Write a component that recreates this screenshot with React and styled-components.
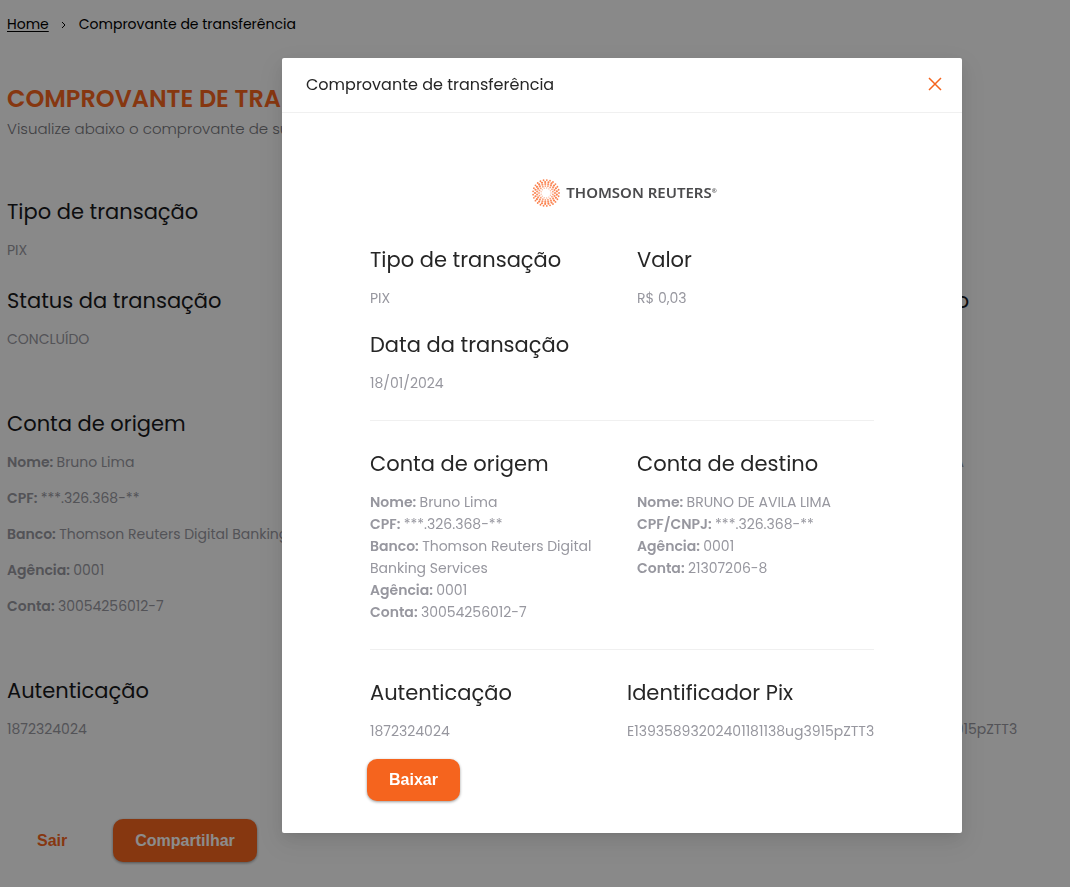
import React from "react";
import styled, { createGlobalStyle } from "styled-components";

const GlobalStyle = createGlobalStyle`
  * { box-sizing: border-box; }
  body {
    margin: 0;
    background: #fafafa;
    color: #18191c;
    font-family: Poppins, Inter, sans-serif;
    font-size: 14px;
    line-height: 22px;
  }
  h1, h2, h3, p { margin: 0; font-weight: 400; }
`;

const Page = styled.main`
  min-height: 100vh;
  padding: 12px 0 24px 7px;
  overflow: hidden;
`;

const Breadcrumb = styled.nav`
  display: flex;
  align-items: center;
  gap: 12px;
  line-height: 24px;
  color: #000;
  a { color: inherit; text-underline-offset: 2px; }
`;

const PageTitle = styled.h1`
  margin-top: 46px;
  font-size: 24px;
  line-height: 34px;
  font-weight: 600;
  color: #f5641e;
  white-space: nowrap;
`;

const Subtitle = styled.p`
  font-size: 15px;
  line-height: 26px;
  font-weight: 300;
  color: #77777c;
`;

const PageRow = styled.section`
  display: grid;
  grid-template-columns: 1fr 300px;
  margin-top: ${(p) => p.$top}px;
`;

const Heading = styled.h3`
  margin-bottom: 11px;
  font-size: 21px;
  line-height: 32px;
  color: ${(p) => (p.$modal ? "#262626" : "#18191c")};
  white-space: nowrap;
`;

const Line = styled.p`
  color: #97979f;
  line-height: 22px;
  margin-bottom: ${(p) => (p.$spaced ? 14 : 0)}px;
  &:last-child { margin-bottom: 0; }
  strong { font-weight: 600; }
`;

const Button = styled.button`
  height: ${(p) => (p.$large ? 43 : 42)}px;
  padding: 0 22px;
  border: 0;
  border-radius: 10px;
  background: ${(p) => (p.$plain ? "transparent" : "#f5641e")};
  color: ${(p) => (p.$plain ? "#f5641e" : "#fff")};
  box-shadow: ${(p) => (p.$plain ? "none" : "0 1px 3px rgba(0, 0, 0, 0.4)")};
  font: 700 16px/20px "Liberation Sans", Arial, sans-serif;
  cursor: pointer;
`;

const PageActions = styled.div`
  display: flex;
  gap: 24px;
  margin-top: 79px;
  padding-left: 8px;
`;

const Overlay = styled.div`
  position: fixed;
  inset: 0;
  display: flex;
  justify-content: center;
  align-items: flex-start;
  padding: 58px 0 0 174px;
  overflow: auto;
  background: rgba(0, 0, 0, 0.45);
`;

const Modal = styled.div`
  width: 680px;
  max-width: 100%;
  background: #fff;
  border-radius: 2px;
  box-shadow: 0 3px 6px -4px rgba(0, 0, 0, 0.12), 0 6px 16px rgba(0, 0, 0, 0.08),
    0 9px 28px 8px rgba(0, 0, 0, 0.05);
`;

const ModalHeader = styled.header`
  display: flex;
  align-items: center;
  justify-content: space-between;
  padding: 15px 20px 15px 24px;
  border-bottom: 1px solid #f0f0f0;
`;

const ModalTitle = styled.h2`
  font-size: 16px;
  line-height: 24px;
  color: #262626;
`;

const CloseButton = styled.button`
  display: flex;
  padding: 0 0 2px;
  border: 0;
  background: none;
  cursor: pointer;
`;

const ModalBody = styled.div`
  padding: 66px 88px 32px;
`;

const Logo = styled.div`
  display: flex;
  align-items: center;
  justify-content: center;
  gap: 6px;
  height: 28px;
  margin-bottom: 37px;
  padding-left: 5px;
  font: 600 15px/28px "Noto Sans", sans-serif;
  color: #4b4b4d;
  span { padding-bottom: 2px; }
  sup { font-size: 6px; line-height: 8px; vertical-align: 5px; }
`;

const Columns = styled.section`
  display: grid;
  grid-template-columns: minmax(0, 1fr) ${(p) => p.$side || 237}px;
  row-gap: 20px;
  & > div:nth-child(odd) { padding-right: 24px; }
`;

const Divider = styled.hr`
  margin: 26px 0 27px;
  border: 0;
  border-top: 1px solid #f0f0f0;
`;

const ModalActions = styled.div`
  margin: 17px 0 0 -3px;
`;

function Field({ title, lines, modal, spaced }) {
  return (
    <div>
      <Heading $modal={modal}>{title}</Heading>
      {lines.map(([label, value]) => (
        <Line key={label + value} $spaced={spaced}>
          {label && <strong>{label}: </strong>}
          {value}
        </Line>
      ))}
    </div>
  );
}

const rings = [
  { r: 5, n: 13, s: 0.7, o: 0.5 },
  { r: 7, n: 17, s: 0.9, o: 0.7 },
  { r: 9, n: 19, s: 1.1, o: 0.8 },
  { r: 11, n: 21, s: 1.1, o: 0.9 },
  { r: 13, n: 25, s: 0.9, o: 0.9 },
];

function Sunburst() {
  return (
    <svg width="28" height="28" viewBox="-14 -14 28 28" fill="#f9763d" aria-hidden="true">
      {rings.map((ring, k) =>
        Array.from({ length: ring.n }, (_, i) => {
          const a = ((i + (k % 2) / 2) / ring.n) * Math.PI * 2;
          return (
            <circle
              key={`${k}-${i}`}
              cx={ring.r * Math.cos(a)}
              cy={ring.r * Math.sin(a)}
              r={ring.s}
              opacity={ring.o}
            />
          );
        })
      )}
    </svg>
  );
}

const origin = [
  ["Nome", "Bruno Lima"],
  ["CPF", "***.326.368-**"],
  ["Banco", "Thomson Reuters Digital Banking Services"],
  ["Agência", "0001"],
  ["Conta", "30054256012-7"],
];
const destination = [
  ["Nome", "BRUNO DE AVILA LIMA"],
  ["CPF/CNPJ", "***.326.368-**"],
  ["Agência", "0001"],
  ["Conta", "21307206-8"],
];
const type = [["", "PIX"]];
const amount = [["", "R$ 0,03"]];
const date = [["", "18/01/2024"]];
const auth = [["", "1872324024"]];
const pixId = [["", "E13935893202401181138ug3915pZTT3"]];

export default function App() {
  return (
    <>
      <GlobalStyle />
      <Page>
        <Breadcrumb>
          <a href="#home">Home</a>
          <svg width="6" height="8" viewBox="0 0 6 8" fill="none" stroke="#000" aria-hidden="true">
            <path d="M1 2 4 5 1 8" />
          </svg>
          <span>Comprovante de transferência</span>
        </Breadcrumb>
        <PageTitle>COMPROVANTE DE TRANSFERÊNCIA</PageTitle>
        <Subtitle>Visualize abaixo o comprovante de sua transferência</Subtitle>
        <PageRow $top={54}>
          <Field title="Tipo de transação" lines={type} />
          <Field title="Valor" lines={amount} />
        </PageRow>
        <PageRow $top={24}>
          <Field title="Status da transação" lines={[["", "CONCLUÍDO"]]} />
          <Field title="Data da transação" lines={date} />
        </PageRow>
        <PageRow $top={58}>
          <Field title="Conta de origem" lines={origin} spaced />
          <Field title="Conta de destino" lines={destination} spaced />
        </PageRow>
        <PageRow $top={58}>
          <Field title="Autenticação" lines={auth} />
          <Field title="Identificador Pix" lines={pixId} />
        </PageRow>
        <PageActions>
          <Button $plain $large>Sair</Button>
          <Button $large>Compartilhar</Button>
        </PageActions>
      </Page>
      <Overlay>
        <Modal role="dialog" aria-modal="true" aria-labelledby="modal-title">
          <ModalHeader>
            <ModalTitle id="modal-title">Comprovante de transferência</ModalTitle>
            <CloseButton aria-label="Fechar">
              <svg width="14" height="14" viewBox="0 0 14 14" stroke="#f5641e" strokeWidth="1.5" aria-hidden="true">
                <path d="M1 1 13 13M13 1 1 13" />
              </svg>
            </CloseButton>
          </ModalHeader>
          <ModalBody>
            <Logo>
              <Sunburst />
              <span>THOMSON REUTERS<sup>®</sup></span>
            </Logo>
            <Columns>
              <Field modal title="Tipo de transação" lines={type} />
              <Field modal title="Valor" lines={amount} />
              <Field modal title="Data da transação" lines={date} />
            </Columns>
            <Divider />
            <Columns>
              <Field modal title="Conta de origem" lines={origin} />
              <Field modal title="Conta de destino" lines={destination} />
            </Columns>
            <Divider />
            <Columns $side={247}>
              <Field modal title="Autenticação" lines={auth} />
              <Field modal title="Identificador Pix" lines={pixId} />
            </Columns>
            <ModalActions>
              <Button>Baixar</Button>
            </ModalActions>
          </ModalBody>
        </Modal>
      </Overlay>
    </>
  );
}
